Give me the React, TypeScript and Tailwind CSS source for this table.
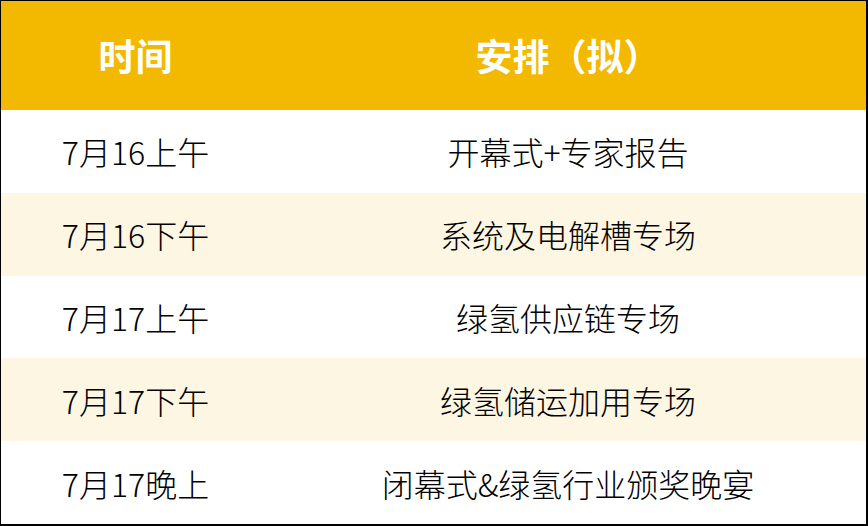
const rows: [string, string][] = [
  ["7月16上午", "开幕式+专家报告"],
  ["7月16下午", "系统及电解槽专场"],
  ["7月17上午", "绿氢供应链专场"],
  ["7月17下午", "绿氢储运加用专场"],
  ["7月17晚上", "闭幕式&绿氢行业颁奖晚宴"],
];

export default function App() {
  return (
    <div
      className="h-[526px] w-[868px] overflow-hidden bg-white"
      style={{ fontFamily: '"Noto Sans CJK SC", "Noto Sans", sans-serif' }}
    >
      <div className="flex h-full flex-col border-t border-l border-r-2 border-b-2 border-black">
        <div className="flex h-[109px] shrink-0 items-center bg-[#f2b900] text-[37px] font-bold text-white">
          <div className="w-[269px] text-center">时间</div>
          <div className="flex-1 text-center">安排（拟）</div>
        </div>
        {rows.map(([time, plan], i) => (
          <div
            key={time}
            className={`flex flex-1 items-center text-[32px] font-light text-black ${
              i % 2 === 1 ? "bg-[#fdf6e3]" : "bg-white"
            }`}
          >
            <div className="w-[269px] text-center">{time}</div>
            <div className="flex-1 text-center">{plan}</div>
          </div>
        ))}
      </div>
    </div>
  );
}
